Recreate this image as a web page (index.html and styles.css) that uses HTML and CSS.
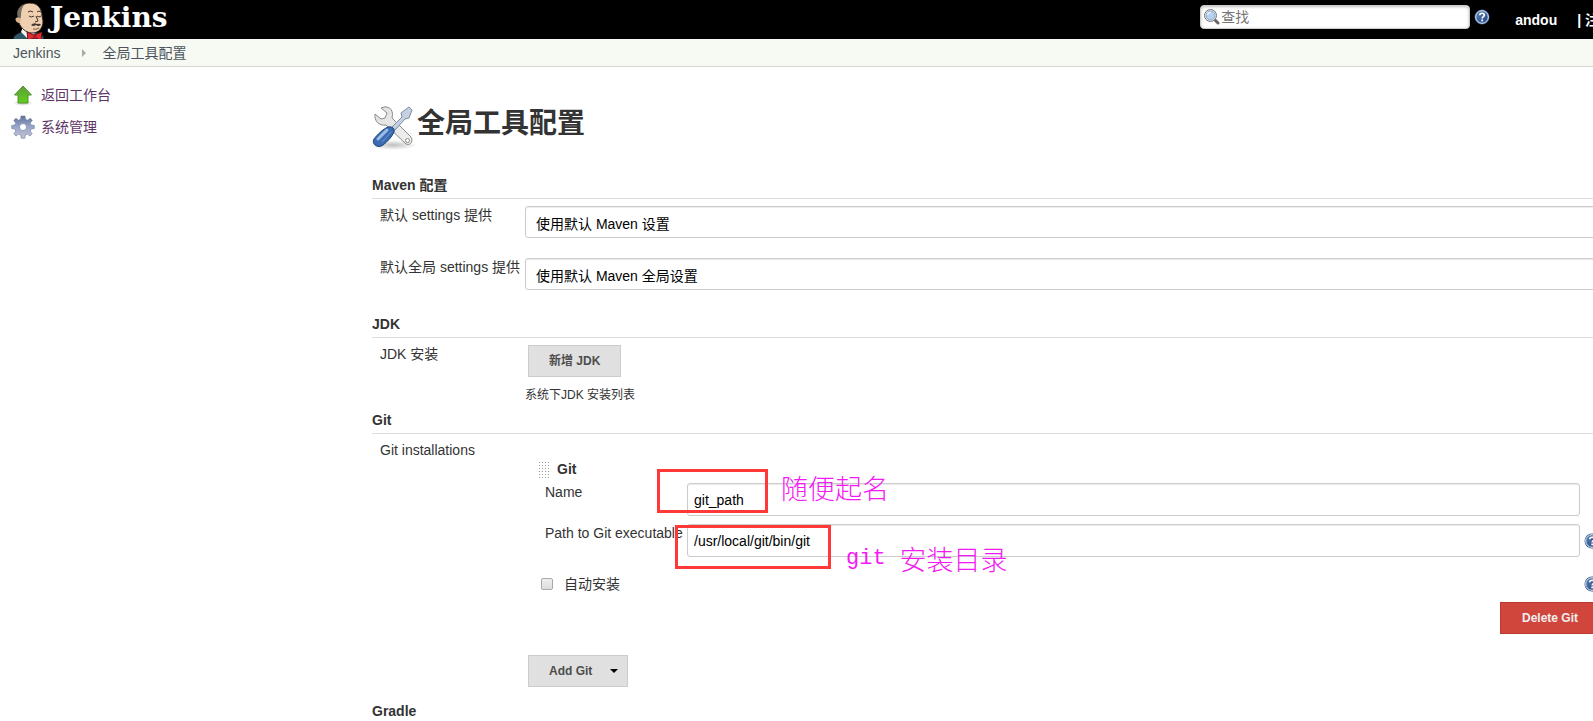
FILE: index.html
```html
<!DOCTYPE html>
<html lang="zh-CN">
<head>
  <meta charset="UTF-8">
  <meta name="viewport" content="width=device-width, initial-scale=1.0">
  <title>全局工具配置 [Jenkins]</title>
  <link rel="stylesheet" href="styles.css">
</head>
<body>
  <svg class="defs" width="0" height="0" aria-hidden="true">
    <defs>
      <linearGradient id="blue" x1="0" y1="0" x2="1" y2="1">
        <stop offset="0" stop-color="#5f83b8"/>
        <stop offset="1" stop-color="#1d427f"/>
      </linearGradient>
      <linearGradient id="green" x1="0" y1="0" x2="0" y2="1">
        <stop offset="0" stop-color="#5c9e38"/>
        <stop offset="1" stop-color="#63cf1c"/>
      </linearGradient>
      <linearGradient id="gear" x1="0" y1="0" x2="0" y2="1">
        <stop offset="0" stop-color="#5f7299"/>
        <stop offset="0.5" stop-color="#9aa7cd"/>
        <stop offset="1" stop-color="#c4c4d6"/>
      </linearGradient>
      <linearGradient id="steel" x1="0" y1="0" x2="1" y2="1">
        <stop offset="0" stop-color="#e0e0de"/>
        <stop offset="1" stop-color="#f0f0ee"/>
      </linearGradient>
      <radialGradient id="shade">
        <stop offset="0" stop-color="#000" stop-opacity="0.25"/>
        <stop offset="1" stop-color="#000" stop-opacity="0"/>
      </radialGradient>
      <symbol id="help" viewBox="0 0 16 16">
        <circle cx="8" cy="8" r="7.5" fill="#31578f"/>
        <circle cx="8" cy="8" r="6.3" fill="url(#blue)" stroke="#e6edf6" stroke-width="1"/>
        <path d="M5.7 6.3C5.8 3.6 10.4 3.6 10.4 6.1C10.4 7.7 8.2 7.7 8.2 9.5" fill="none" stroke="#fff" stroke-width="1.7"/>
        <rect x="7.3" y="10.5" width="1.8" height="1.8" fill="#fff"/>
      </symbol>
    </defs>
  </svg>

  <div class="page">
    <header class="header">
      <a class="logo" href="#">
        <svg width="32" height="37" viewBox="0 0 32 37" aria-hidden="true">
          <path d="M0 37C0 33 3 31 8 29L23 29C29 30 31 33 31 37Z" fill="#2d5566" stroke="#111" stroke-width="1"/>
          <path d="M8 29L10 24L22 26L21 33L14 35Z" fill="#f4f4f2"/>
          <path d="M6 20C2 19 2 14 5 14C3 5 10 0 17 0C25 0 29 6 29 13L30 18C30 25 26 30 19 30C13 30 8 25 6 20Z" fill="#eed0b0" stroke="#3b2b22" stroke-width="1"/>
          <path d="M5 14C3 8 6 3 11 2C9 5 8 8 8 13L7 18Z" fill="#756c66"/>
          <path d="M4 15C1 15 3 20 7 20L8 15Z" fill="#deb590"/>
          <path d="M15 9Q17 7 20 9M24 9Q26 7 28 9M16 13Q18 15 21 13M24 13Q26 15 28 13M23 13L25 18L22 19" fill="none" stroke="#40312a" stroke-width="1"/>
          <path d="M18 22Q21 19 24 21Q27 20 28 22Q25 24 23 22Q20 24 18 22Z" fill="#443731"/>
          <path d="M20 26Q23 27 26 25" fill="none" stroke="#8b5549" stroke-width="1"/>
          <path d="M14 29L21 32L29 29L28 37L22 35L15 37Z" fill="#e32b32" stroke="#64171a" stroke-width="1"/>
          <circle cx="22" cy="33.5" r="2" fill="#b31a22"/>
        </svg>
        <span class="logo-text">Jenkins</span>
      </a>
      <form class="search">
        <svg class="search-icon" width="17" height="17" viewBox="0 0 17 17" aria-hidden="true">
          <path d="M11 11L15 15" stroke="#666" stroke-width="3" stroke-linecap="round"/>
          <circle cx="7.5" cy="7.5" r="6" fill="#f2f2f0" stroke="#777" stroke-width="1"/>
          <circle cx="7.5" cy="7.5" r="4.5" fill="#b6d0ef" stroke="#86a5cc" stroke-width="1"/>
          <path d="M4.5 7Q5 4 8 4.5" fill="none" stroke="#e9f3ff" stroke-width="1.5"/>
        </svg>
        <input class="search-input" type="text" placeholder="查找" aria-label="查找">
        <a class="help" href="#" aria-label="帮助"><svg width="16" height="16"><use href="#help"/></svg></a>
      </form>
      <div class="login">
        <a href="#">andou</a>
        <span>| <a href="#">注销</a></span>
      </div>
    </header>

    <nav class="breadcrumbs">
      <a href="#">Jenkins</a>
      <span class="separator"></span>
      <a href="#">全局工具配置</a>
    </nav>

    <div class="content">
      <aside class="side-panel">
        <a class="task" href="#">
          <svg width="24" height="24" viewBox="0 0 24 24" aria-hidden="true">
            <ellipse cx="12" cy="20" rx="10" ry="3" fill="url(#shade)"/>
            <path d="M12 3L20.5 12H17V20H7V12H3.5Z" fill="url(#green)" stroke="#55922f" stroke-width="1"/>
          </svg>
          返回工作台
        </a>
        <a class="task" href="#">
          <svg width="24" height="24" viewBox="0 0 24 24" aria-hidden="true">
            <g fill="url(#gear)" stroke="#6b789b" stroke-width="0.6">
              <path fill-rule="evenodd" d="M10 1H14L14.5 4.3L16.6 5.2L19.3 3.2L21.3 5.4L19.2 8L20 10L23.3 10.5V13.5L20 14L19.2 16.2L21.2 18.800L19 21L16.4 19L14.3 19.9L13.8 23.2H10.2L9.7 19.900L7.6 19L5 21L2.8 18.8L4.8 16.2L4 14L0.7 13.5V10.5L4 10L4.8 8L2.7 5.4L4.9 3.2L7.5 5.2L9.5 4.3ZM12 8.6A3.5 3.5 0 1 0 12 15.6A3.5 3.5 0 1 0 12 8.6Z"/>
            </g>
          </svg>
          系统管理
        </a>
      </aside>

      <main class="main-panel">
        <h1>
          <svg width="48" height="46" viewBox="0 0 48 46" aria-hidden="true">
            <ellipse cx="24" cy="41" rx="24" ry="5" fill="url(#shade)"/>
            <path d="M15 3C21 2 25 7 23 14L42 33C45 38 40 43 36 39L17 21C10 22 5 17 6 10L12 15L16 14L18 9L12 4Z" fill="url(#steel)" stroke="#8a8c88" stroke-width="1"/>
            <circle cx="38.5" cy="36.5" r="2" fill="#fff" stroke="#8a8c88"/>
            <path d="M23 23L33 13L32 9L40 3L43 6L40 14L36 15L26 26Z" fill="#c5d1e0" stroke="#7b8da5" stroke-width="1"/>
            <path d="M19 23C23 22 26 25 25 28C23 33 18 38 14 41C9 45 2 40 5 35C8 31 14 25 19 23Z" fill="#3b6bb0" stroke="#1c417c" stroke-width="1"/>
            <path d="M18 26L9 35" stroke="#9cbce5" stroke-width="3" stroke-linecap="round"/>
            <path d="M22 28L13 38" stroke="#6c97d0" stroke-width="1" stroke-linecap="round"/>
          </svg>
          全局工具配置
        </h1>

        <form>
          <section>
            <h2>Maven 配置</h2>
            <div class="row">
              <label for="settings">默认 settings 提供</label>
              <select id="settings"><option>使用默认 Maven 设置</option></select>
            </div>
            <div class="row">
              <label for="globalSettings">默认全局 settings 提供</label>
              <select id="globalSettings"><option>使用默认 Maven 全局设置</option></select>
            </div>
          </section>

          <section>
            <h2>JDK</h2>
            <div class="row row-tight">
              <span class="label">JDK 安装</span>
              <div>
                <button class="btn" type="button">新增 JDK</button>
                <p class="description">系统下JDK 安装列表</p>
              </div>
            </div>
          </section>

          <section>
            <h2>Git</h2>
            <div class="row row-tight">
              <span class="label">Git installations</span>
              <div>
                <div class="installation">
                  <div class="drag-title">
                    <span class="handle"></span>
                    <b>Git</b>
                  </div>
                  <div class="field">
                    <label for="gitName">Name</label>
                    <input id="gitName" type="text" value="git_path">
                  </div>
                  <div class="field">
                    <label for="gitHome">Path to Git executable</label>
                    <input id="gitHome" type="text" value="/usr/local/git/bin/git">
                    <a class="help" href="#" aria-label="帮助"><svg width="16" height="16"><use href="#help"/></svg></a>
                  </div>
                  <div class="auto-install">
                    <input id="autoInstall" type="checkbox">
                    <label for="autoInstall">自动安装</label>
                    <a class="help" href="#" aria-label="帮助"><svg width="16" height="16"><use href="#help"/></svg></a>
                  </div>
                  <button class="btn btn-danger" type="button">Delete Git</button>

                  <div class="mark mark-name"></div>
                  <div class="mark mark-path"></div>
                  <div class="note note-name">随便起名</div>
                  <div class="note note-path"><span>git</span>安装目录</div>
                </div>
                <button class="btn btn-menu" type="button">Add Git</button>
              </div>
            </div>
          </section>

          <section>
            <h2>Gradle</h2>
          </section>
        </form>
      </main>
    </div>
  </div>
</body>
</html>
```
FILE: styles.css
```css
* {
  box-sizing: border-box;
}
body {
  margin: 0;
  overflow: hidden;
  background: #fff;
  color: #333;
  font-family: "Liberation Sans", "Noto Sans CJK SC", sans-serif;
  font-size: 14px;
  line-height: 20px;
}
a {
  color: inherit;
  text-decoration: none;
}
svg {
  display: block;
  flex: none;
}
.defs {
  position: absolute;
}

/* the page is a little wider than the window */
.page {
  width: calc(100% + 32px);
}

/* header */
.header {
  display: flex;
  align-items: flex-start;
  height: 39px;
  padding: 0 12px 0 13px;
  background: #000;
  color: #fff;
  overflow: hidden;
}
.logo {
  display: flex;
  gap: 5px;
  margin-right: auto;
  padding-top: 3px;
}
.logo-text {
  font: bold 28px/30px "DejaVu Serif", serif;
}
.search {
  display: flex;
  align-items: center;
  position: relative;
  gap: 4px;
  padding-top: 5px;
}
.search-icon {
  position: absolute;
  left: 3px;
  top: 8px;
}
.search-input {
  width: 270px;
  height: 24px;
  padding: 0 4px 0 20px;
  border: 1px solid #ccc;
  border-radius: 4px;
  box-shadow: inset 0 1px 3px #bbb;
  font: inherit;
}
.search-input::placeholder {
  color: #757575;
}
.login {
  display: flex;
  gap: 20px;
  padding: 10px 0 0 25px;
  font-weight: bold;
}

.breadcrumbs {
  display: flex;
  align-items: center;
  height: 28px;
  padding-left: 13px;
  background: #f6faf2;
  border-bottom: 1px solid #d3d7cf;
  color: #4d545d;
}
.separator {
  width: 4px;
  margin: 0 16px 0 22px;
  border: 4px solid transparent;
  border-left-color: #aaa;
  border-right: 0;
}

/* columns */
.content {
  display: flex;
}
.side-panel {
  width: 372px;
  flex: none;
  padding: 16px 11px;
}
.task {
  display: flex;
  align-items: center;
  gap: 6px;
  height: 24px;
  margin-bottom: 8px;
  color: #5c3566;
}
.main-panel {
  flex: 1;
  padding: 37px 25px 0 0;
}

h1 {
  display: flex;
  height: 46px;
  margin: 0 0 25px -3px;
  font-size: 28px;
  line-height: 40px;
}
section {
  padding-bottom: 4px;
}
h2 {
  margin: 0 0 7px;
  padding-bottom: 3px;
  border-bottom: 1px solid #ddd;
  font-size: 14px;
  line-height: 20px;
}
.row {
  display: grid;
  grid-template-columns: 145px 1fr;
  margin: 0 0 20px 8px;
  line-height: 18px;
}
.row-tight {
  margin-bottom: 0;
}
select,
.field input {
  width: 100%;
  height: 32px;
  border: 1px solid #ccc;
  border-radius: 3px;
  box-shadow: inset 0 1px 1px rgba(0,0,0,0.08);
  background: #fff;
  color: #000;
  font: inherit;
}
select {
  appearance: none;
  padding: 3px 10px 0;
}
.description {
  margin: 7px 0 0;
  font-size: 12px;
  line-height: 22px;
}

.btn {
  display: block;
  height: 32px;
  margin-left: 3px;
  padding: 0 20px;
  border: 1px solid #ccc;
  background: #e0e0e0;
  color: #4d4d4d;
  font: bold 12px/20px "Liberation Sans", "Noto Sans CJK SC", sans-serif;
}
.btn-danger {
  margin: 8px 0 0 auto;
  padding: 0 21px;
  border-color: #b83a31;
  background: #d0463d;
  color: #eee;
}
.btn-menu {
  display: flex;
  align-items: center;
  gap: 18px;
  margin: 21px 0 10px 3px;
  padding-right: 9px;
}
.btn-menu::after {
  content: "";
  border: 4px solid transparent;
  border-top-color: #000;
  border-bottom: 0;
}

/* git installation */
.installation {
  position: relative;
  padding: 18px 0 0 13px;
}
.drag-title {
  display: flex;
  align-items: center;
  gap: 8px;
  height: 20px;
  margin-bottom: 4px;
}
.handle {
  width: 11px;
  height: 17px;
  background: radial-gradient(circle, #999 1px, transparent 1px) 0 0 / 3px 3px;
}
.field {
  display: grid;
  grid-template-columns: 142px 1fr 16px;
  align-items: center;
  height: 33px;
  margin: 0 0 8px 7px;
}
.field label {
  align-self: start;
  white-space: nowrap;
}
.field input {
  width: auto;
  height: 33px;
  margin-right: 4px;
  padding: 0 6px;
}
.auto-install {
  display: flex;
  align-items: center;
  gap: 11px;
  height: 20px;
  margin: 17px 0 0 3px;
}
.auto-install input {
  appearance: none;
  width: 12px;
  height: 12px;
  margin: 0;
  border: 1px solid #aaa;
  border-radius: 2px;
  background: linear-gradient(#eee, #ddd);
}
.auto-install .help {
  margin-left: auto;
}

/* annotations over the form */
.mark {
  position: absolute;
  height: 44px;
  border: 3px solid #ff3838;
}
.mark-name {
  left: 132px;
  top: 28px;
  width: 111px;
}
.mark-path {
  left: 150px;
  top: 84px;
  width: 156px;
}
.note {
  position: absolute;
  color: #f31af3;
  font: 300 27px/30px "Noto Sans CJK SC", sans-serif;
  white-space: nowrap;
}
.note-name {
  left: 256px;
  top: 32px;
}
.note-path {
  display: flex;
  gap: 14px;
  left: 321px;
  top: 103px;
}
.note-path span {
  font: 22px/30px "Liberation Mono", monospace;
}
```
